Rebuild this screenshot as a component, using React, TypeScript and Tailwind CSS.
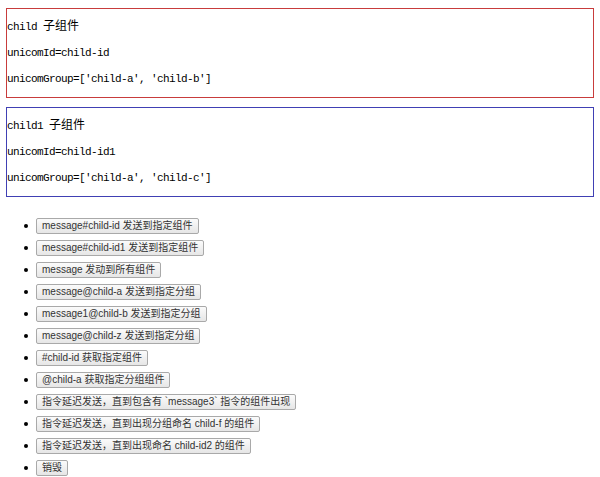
import React from "react";

const buttons: string[] = [
  "message#child-id 发送到指定组件",
  "message#child-id1 发送到指定组件",
  "message 发动到所有组件",
  "message@child-a 发送到指定分组",
  "message1@child-b 发送到指定分组",
  "message@child-z 发送到指定分组",
  "#child-id 获取指定组件",
  "@child-a 获取指定分组组件",
  "指令延迟发送，直到包含有 `message3` 指令的组件出现",
  "指令延迟发送，直到出现分组命名 child-f 的组件",
  "指令延迟发送，直到出现命名 child-id2 的组件",
  "销毁",
];

function Box({
  border,
  name,
  id,
  group,
}: {
  border: string;
  name: string;
  id: string;
  group: string;
}) {
  return (
    <div className={`w-[588px] border ${border} text-black py-[11px] flex flex-col gap-[12px]`}>
      <p className="leading-[14px] text-[11px] tracking-[-0.6px]">
        {name} <span className="text-[12px] tracking-normal">子组件</span>
      </p>
      <p className="leading-[14px] text-[11px] tracking-[-0.6px]">{id}</p>
      <p className="leading-[14px] text-[11px] tracking-[-0.6px]">{group}</p>
    </div>
  );
}

export default function App() {
  return (
    <div
      className="w-[600px] h-[477px] bg-white pt-[8px] pl-[6px] overflow-hidden"
      style={{ fontFamily: '"Liberation Mono", "Noto Sans CJK SC", monospace' }}
    >
      <Box
        border="border-[#c83c3c]"
        name="child"
        id="unicomId=child-id"
        group="unicomGroup=['child-a', 'child-b']"
      />
      <div className="h-[9px]" />
      <Box
        border="border-[#4040b4]"
        name="child1"
        id="unicomId=child-id1"
        group="unicomGroup=['child-a', 'child-c']"
      />
      <ul
        className="mt-[21px] flex flex-col gap-[6px]"
        style={{ fontFamily: '"Liberation Sans", "Noto Sans CJK SC", sans-serif' }}
      >
        {buttons.map((b) => (
          <li key={b} className="flex items-center h-[16px]">
            <span className="ml-[18px] mr-[8px] w-[4px] h-[4px] rounded-full bg-black" />
            <button className="h-[16px] px-[5px] border border-[#a9a9a9] rounded-[2px] bg-gradient-to-b from-[#fbfbfb] to-[#e6e6e6] text-[10px] leading-[14px] text-[#333] whitespace-nowrap">
              {b}
            </button>
          </li>
        ))}
      </ul>
    </div>
  );
}
